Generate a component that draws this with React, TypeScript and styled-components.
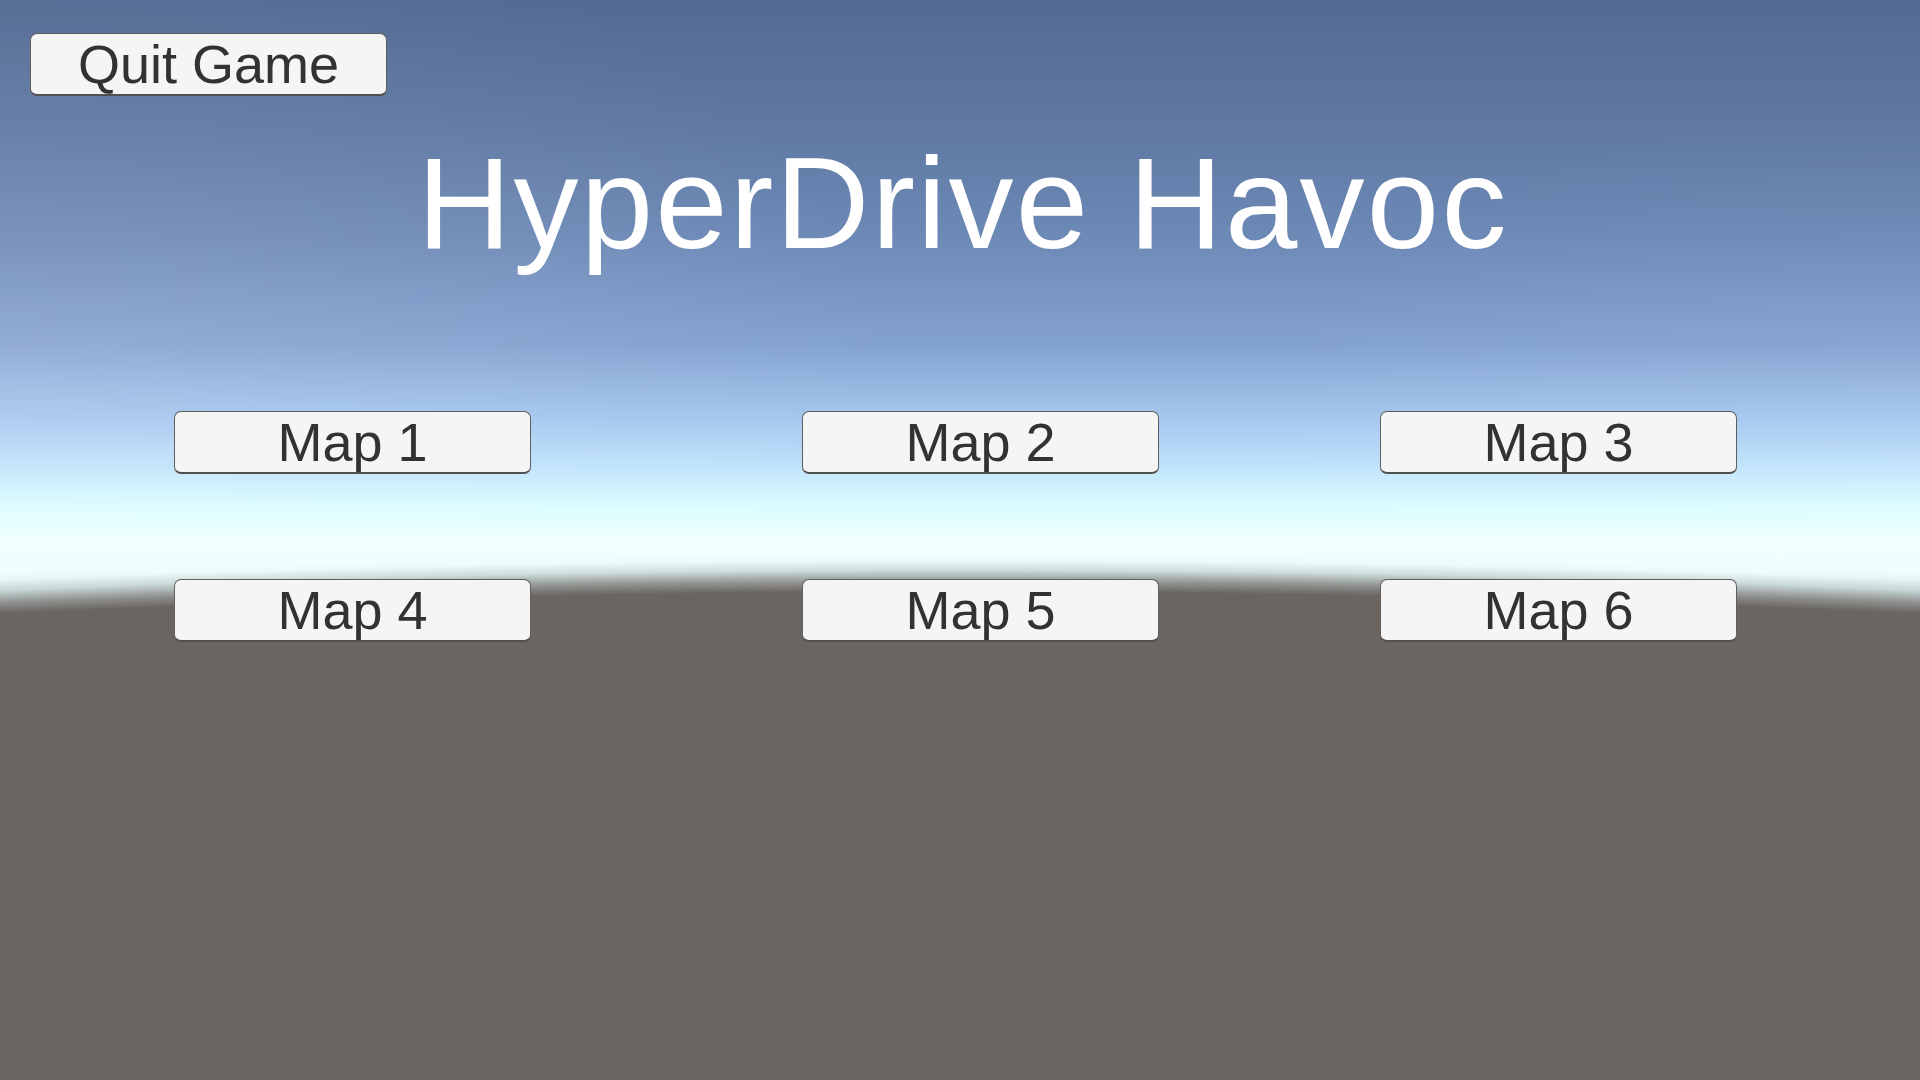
import React from "react";
import styled, { createGlobalStyle } from "styled-components";

const GlobalStyle = createGlobalStyle`
  html, body {
    margin: 0;
    padding: 0;
    width: 100%;
    height: 100%;
    overflow: hidden;
  }
  body {
    font-family: "Liberation Sans", Arial, sans-serif;
  }
`;

// sky + ground of the scene behind the menu
const Scene = styled.div`
  width: 1920px;
  height: 1080px;
  display: flex;
  flex-direction: column;
  box-sizing: border-box;
  padding: 33px 0 0 30px;
  background:
    radial-gradient(
      ellipse 3101px 400px at 960px 952px,
      #6b6561 0%,
      #6b6561 90%,
      rgba(135, 136, 134, 0.9) 92.5%,
      rgba(185, 200, 200, 0.6) 95.5%,
      rgba(225, 242, 242, 0.25) 98%,
      rgba(235, 250, 250, 0) 100%
    ),
    radial-gradient(ellipse 900px 500px at 0% 35%, rgba(255, 255, 255, 0.12), transparent 100%),
    radial-gradient(ellipse 700px 400px at 100% 45%, rgba(255, 255, 255, 0.06), transparent 100%),
    linear-gradient(
      180deg,
      #546a93 0%,
      #5f79a3 12%,
      #6d89b6 22%,
      #84a2d0 32%,
      #a6c8ef 39%,
      #bfe2fb 43%,
      #dbfdff 47%,
      #f0ffff 50%,
      #eefdfd 53%,
      #d6e6e6 55%,
      #a8b0b0 57.5%,
      #6b6561 60.5%,
      #6a625d 100%
    );
`;

const Button = styled.button`
  box-sizing: border-box;
  width: 357px;
  height: 63px;
  padding: 1px 0 0;
  margin: 0;
  background: #f5f5f5;
  border: 1px solid #5e5e5e;
  border-bottom: 2px solid #505050;
  border-radius: 7px;
  color: #323232;
  font-family: "Liberation Sans", Arial, sans-serif;
  font-size: 54px;
  line-height: 57px;
  text-align: center;
  cursor: pointer;
`;

const Title = styled.h1`
  margin: 42px 0 0 -30px;
  width: 1920px;
  box-sizing: border-box;
  padding-left: 6px;
  text-align: center;
  color: #ffffff;
  font-family: "Liberation Sans", Arial, sans-serif;
  font-weight: 400;
  font-size: 130px;
  line-height: 130px;
  letter-spacing: 2.3px;
`;

const MapGrid = styled.div`
  margin: 143px 0 0 144px;
  display: grid;
  grid-template-columns: 357px 271px 357px 221px 357px;
  row-gap: 105px;
`;

const MapButton = styled(Button)<{ $col: number }>`
  grid-column: ${(p) => p.$col * 2 + 1};
`;

const maps = [1, 2, 3, 4, 5, 6];

export default function App() {
  return (
    <>
      <GlobalStyle />
      <Scene>
        <div>
          <Button>Quit Game</Button>
        </div>
        <Title>HyperDrive Havoc</Title>
        <MapGrid>
          {maps.map((n) => (
            <MapButton key={n} $col={(n - 1) % 3}>
              Map {n}
            </MapButton>
          ))}
        </MapGrid>
      </Scene>
    </>
  );
}
